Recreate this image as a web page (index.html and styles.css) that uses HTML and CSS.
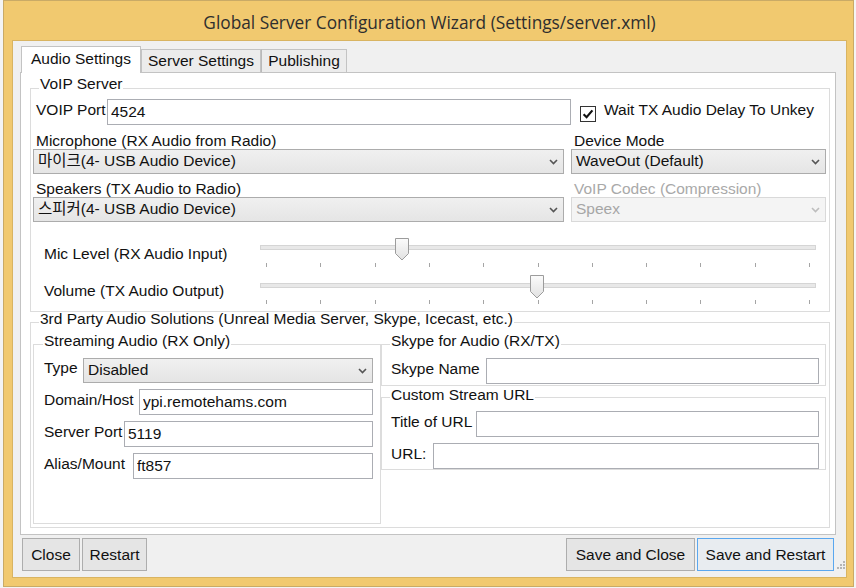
FILE: index.html
```html
<!DOCTYPE html>
<html>
<head>
<meta charset="utf-8">
<link rel="stylesheet" href="styles.css">
</head>
<body>
<div class="window">
  <div class="titlebar">Global Server Configuration Wizard (Settings/server.xml)</div>
  <div class="client">
    <div class="tabs">
      <div class="tab active t-audio">Audio Settings</div>
      <div class="tab t-server">Server Settings</div>
      <div class="tab t-pub">Publishing</div>
    </div>
    <div class="panel">
      <div class="group voip">
        <div class="gtitle">VoIP Server</div>
        <div class="row r-port">
          <span class="lbl port-lbl">VOIP Port</span>
          <input class="tb port-in" value="4524">
          <svg class="chk" width="16" height="16" viewBox="0 0 16 16"><rect x="0.5" y="0.5" width="15" height="15" fill="#fff" stroke="#333"/><path d="M3.6 8.2 L6.6 11.2 L12.4 4.4" fill="none" stroke="#111" stroke-width="2.2"/></svg>
          <span class="chklbl">Wait TX Audio Delay To Unkey</span>
        </div>
        <div class="grid2">
          <div class="glbl">Microphone (RX Audio from Radio)</div>
          <div class="glbl">Device Mode</div>
          <div class="combo"><span class="ctext">마이크(4- USB Audio Device)</span><svg class="chev" width="9" height="6" viewBox="0 0 9 6"><path d="M1 1 L4.5 4.5 L8 1" fill="none" stroke="#555" stroke-width="1.6"/></svg></div>
          <div class="combo"><span class="ctext">WaveOut (Default)</span><svg class="chev" width="9" height="6" viewBox="0 0 9 6"><path d="M1 1 L4.5 4.5 L8 1" fill="none" stroke="#555" stroke-width="1.6"/></svg></div>
          <div class="glbl end">Speakers (TX Audio to Radio)</div>
          <div class="glbl end dis">VoIP Codec (Compression)</div>
          <div class="combo"><span class="ctext">스피커(4- USB Audio Device)</span><svg class="chev" width="9" height="6" viewBox="0 0 9 6"><path d="M1 1 L4.5 4.5 L8 1" fill="none" stroke="#555" stroke-width="1.6"/></svg></div>
          <div class="combo dis"><span class="ctext">Speex</span><svg class="chev" width="9" height="6" viewBox="0 0 9 6"><path d="M1 1 L4.5 4.5 L8 1" fill="none" stroke="#bdbdbd" stroke-width="1.6"/></svg></div>
        </div>
        <div class="slider s1">
          <span class="slbl">Mic Level (RX Audio Input)</span>
          <svg class="trk" width="557" height="34" viewBox="0 0 557 34">
            <defs><linearGradient id="tg1" x1="0" y1="0" x2="0" y2="1"><stop offset="0" stop-color="#fbfbfb"/><stop offset="1" stop-color="#e1e1e1"/></linearGradient></defs>
            <rect x="0.5" y="9.5" width="555" height="4" fill="#e8e8e8" stroke="#d5d5d5"/>
            <path d="M6.5 27v4M60.5 27v4M115.5 27v4M169.5 27v4M223.5 27v4M278.5 27v4M332.5 27v4M386.5 27v4M440.5 27v4M495.5 27v4M549.5 27v4" stroke="#a5a5a5"/>
            <path d="M135.5 2.5h13v15l-6.5 6.5l-6.5 -6.5z" fill="url(#tg1)" stroke="#9c9c9c"/>
          </svg>
        </div>
        <div class="slider s2">
          <span class="slbl">Volume (TX Audio Output)</span>
          <svg class="trk" width="557" height="34" viewBox="0 0 557 34">
            <defs><linearGradient id="tg2" x1="0" y1="0" x2="0" y2="1"><stop offset="0" stop-color="#fbfbfb"/><stop offset="1" stop-color="#e1e1e1"/></linearGradient></defs>
            <rect x="0.5" y="10.5" width="555" height="4" fill="#e8e8e8" stroke="#d5d5d5"/>
            <path d="M6.5 27v4M60.5 27v4M115.5 27v4M169.5 27v4M223.5 27v4M278.5 27v4M332.5 27v4M386.5 27v4M440.5 27v4M495.5 27v4M549.5 27v4" stroke="#a5a5a5"/>
            <path d="M270.5 2.5h13v16l-6.5 6.5l-6.5 -6.5z" fill="url(#tg2)" stroke="#9c9c9c"/>
          </svg>
        </div>
      </div>
      <div class="group third">
        <div class="gtitle">3rd Party Audio Solutions (Unreal Media Server, Skype, Icecast, etc.)</div>
        <div class="subrow">
          <div class="group stream">
            <div class="gtitle">Streaming Audio (RX Only)</div>
            <div class="row srow h25 mt10">
              <span class="lbl type-lbl">Type</span>
              <div class="combo type-cb"><span class="ctext">Disabled</span><svg class="chev" width="9" height="6" viewBox="0 0 9 6"><path d="M1 1 L4.5 4.5 L8 1" fill="none" stroke="#555" stroke-width="1.6"/></svg></div>
            </div>
            <div class="row srow h26 mt6">
              <span class="lbl dom-lbl">Domain/Host</span>
              <input class="tb dom-in" value="ypi.remotehams.com">
            </div>
            <div class="row srow h26 mt6">
              <span class="lbl sp-lbl">Server Port</span>
              <input class="tb sp-in" value="5119">
            </div>
            <div class="row srow h26 mt6">
              <span class="lbl al-lbl">Alias/Mount</span>
              <input class="tb al-in" value="ft857">
            </div>
          </div>
          <div class="scol">
            <div class="group skype">
              <div class="gtitle">Skype for Audio (RX/TX)</div>
              <div class="row krow h26 mt10">
                <span class="lbl sk-lbl">Skype Name</span>
                <input class="tb sk-in" value="">
              </div>
            </div>
            <div class="group custom">
              <div class="gtitle">Custom Stream URL</div>
              <div class="row krow h26 mt9">
                <span class="lbl tu-lbl">Title of URL</span>
                <input class="tb tu-in" value="">
              </div>
              <div class="row krow h26 mt6">
                <span class="lbl url-lbl">URL:</span>
                <input class="tb url-in" value="">
              </div>
            </div>
          </div>
        </div>
      </div>
    </div>
    <div class="btnrow">
      <div class="btn b-close">Close</div>
      <div class="btn b-restart">Restart</div>
      <div class="spacer"></div>
      <div class="btn b-sclose">Save and Close</div>
      <div class="btn b-srestart">Save and Restart</div>
    </div>
    <svg class="grip" width="8" height="8" viewBox="0 0 8 8"><g fill="#b5b5b5"><rect x="6" y="0" width="2" height="2"/><rect x="3" y="3" width="2" height="2"/><rect x="6" y="3" width="2" height="2"/><rect x="0" y="6" width="2" height="2"/><rect x="3" y="6" width="2" height="2"/><rect x="6" y="6" width="2" height="2"/></g></svg>
  </div>
</div>
</body>
</html>
```
FILE: styles.css
```css
html, body { margin: 0; padding: 0; }
body {
  width: 856px; height: 588px; overflow: hidden;
  background: #f4f4f4;
  font-family: "Liberation Sans", "Noto Sans CJK KR", Arial, sans-serif;
  font-size: 15.5px; color: #111;
}
.window {
  box-sizing: border-box;
  margin-left: 3px; width: 851px; height: 587px;
  background: #f1c96f;
  border: 1px solid #c9aa66;
  padding: 0 6px 0 8px;
}
.titlebar {
  box-sizing: border-box; height: 39px; padding-top: 4px;
  display: flex; align-items: center; justify-content: center;
  font-family: "Open Sans", "Noto Sans", sans-serif;
  font-size: 17.3px; color: #2e2e2e; white-space: nowrap;
}
.client {
  position: relative;
  box-sizing: border-box; width: 835px; height: 538px;
  background: #f0f0f0; border: 1px solid #d9b461;
}
.tabs { display: flex; align-items: flex-end; height: 26px; margin: 5px 0 0 8px; }
.tab {
  box-sizing: border-box; height: 23px;
  border: 1px solid #c3c3c3; border-bottom: 0;
  background: #ececec;
  display: flex; align-items: center; justify-content: center; white-space: nowrap;
}
.tab.active {
  height: 27px; margin-bottom: -1px; padding-bottom: 3px;
  background: #fff; position: relative; z-index: 1;
}
.t-audio { width: 120px; }
.t-server { width: 120px; }
.t-pub { width: 86px; border-left-color: #b9b9b9; }
.panel {
  box-sizing: border-box; width: 816px; height: 463px; margin-left: 7px;
  background: #fff; border: 1px solid #c3c3c3; padding-left: 9px;
}
.group { box-sizing: border-box; border: 1px solid #dcdcdc; }
.gtitle { width: max-content; background: #fff; padding: 0 1px; line-height: 14px; white-space: nowrap; }
.voip { width: 800px; height: 224px; margin-top: 15px; }
.voip > .gtitle { margin: -12px 0 0 8px; }
.third { width: 800px; height: 206px; margin-top: 10px; }
.third > .gtitle { margin: -11px 0 0 8px; }

.row { display: flex; align-items: center; }
.lbl { flex: none; line-height: 16px; white-space: nowrap; margin-bottom: 5px; }
.tb {
  flex: none; box-sizing: border-box; height: 26px; margin: 0;
  border: 1px solid #abadb3; background: #fff; padding: 0 3px;
  font: inherit; color: #111; outline: none;
}
.r-port { height: 26px; margin: 8px 0 0 5px; }
.port-lbl { width: 71px; }
.port-in { width: 464px; }
.chk { flex: none; margin: 3px 0 0 9px; }
.chklbl { margin-left: 8px; line-height: 16px; white-space: nowrap; margin-bottom: 4px; }

.grid2 {
  display: grid; grid-template-columns: 531px 255px; column-gap: 7px;
  grid-template-rows: 16px 25px 23px 25px; margin: 8px 0 0 2px;
}
.glbl { padding-left: 3px; line-height: 16px; white-space: nowrap; }
.glbl.end { align-self: end; }
.glbl.dis { color: #a9a9a9; }
.combo {
  box-sizing: border-box; height: 25px;
  border: 1px solid #acacac;
  background: linear-gradient(#f0f0f0, #e5e5e5);
  display: flex; align-items: center; padding: 0 5px 2px 4px; white-space: nowrap;
}
.ctext { flex: 1; line-height: 16px; }
.chev { flex: none; margin-top: 2px; }
.combo.dis { background: #f4f4f4; border-color: #d9d9d9; color: #a6a6a6; }

.slider { display: flex; height: 34px; margin-left: 13px; }
.s1 { margin-top: 14px; }
.s2 { margin-top: 3px; }
.slbl { flex: none; width: 216px; margin-top: 10px; line-height: 16px; white-space: nowrap; }
.trk { flex: none; }

.subrow { display: flex; margin: 18px 0 0 2px; }
.stream { width: 348px; height: 180px; }
.stream > .gtitle { margin: -11px 0 0 9px; }
.scol { width: 445px; display: flex; flex-direction: column; }
.skype { height: 42px; }
.skype > .gtitle { margin: -11px 0 0 8px; }
.custom { height: 73px; margin-top: 11px; }
.custom > .gtitle { margin: -10px 0 0 8px; }

.srow { margin-left: 10px; }
.krow { margin-left: 9px; }
.h25 { height: 25px; }
.h26 { height: 26px; }
.mt6 { margin-top: 6px; }
.mt9 { margin-top: 9px; }
.mt10 { margin-top: 10px; }
.type-lbl { width: 39px; }
.type-cb { width: 290px; flex: none; }
.dom-lbl { width: 95px; }
.dom-in { width: 234px; }
.sp-lbl { width: 80px; }
.sp-in { width: 249px; }
.al-lbl { width: 89px; }
.al-in { width: 240px; }
.sk-lbl { width: 95px; }
.sk-in { width: 333px; }
.tu-lbl { width: 85px; }
.tu-in { width: 343px; }
.url-lbl { width: 42px; }
.url-in { width: 386px; }

.btnrow { display: flex; width: 812px; margin: 3px 0 0 9px; }
.spacer { flex: 1; }
.btn {
  flex: none; box-sizing: border-box; height: 33px;
  border: 1px solid #adadad; background: #e5e5e5;
  display: flex; align-items: center; justify-content: center; white-space: nowrap;
}
.b-close { width: 58px; }
.b-restart { width: 65px; margin-left: 2px; }
.b-sclose { width: 129px; }
.b-srestart { width: 137px; margin-left: 2px; border-color: #5aa7ef; background: #e8ecf0; }
.grip { position: absolute; right: 1px; bottom: 8px; }
```
